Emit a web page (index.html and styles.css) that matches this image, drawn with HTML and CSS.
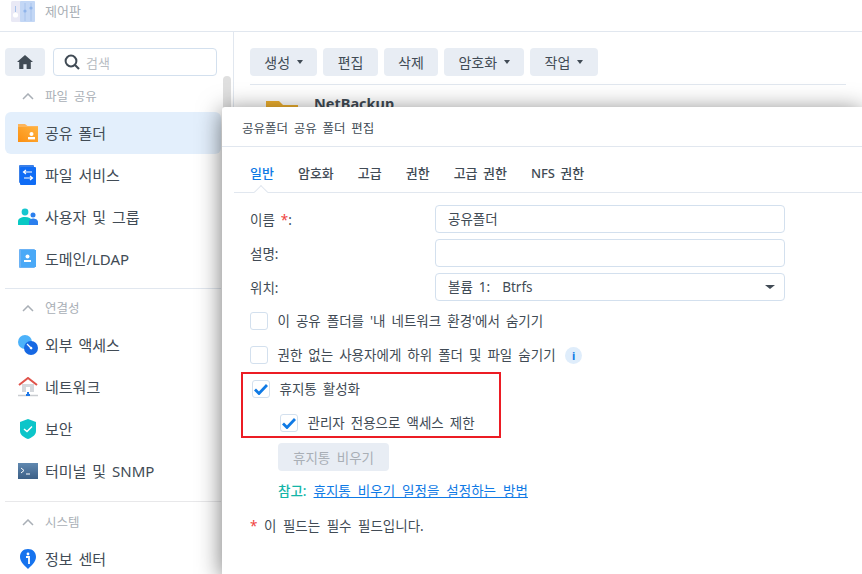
FILE: index.html
```html
<!DOCTYPE html>
<html lang="ko">

<head>
  <meta charset="UTF-8">
  <meta name="viewport" content="width=device-width, initial-scale=1.0">
  <title>제어판</title>
  <link rel="stylesheet" href="styles.css">
</head>

<body>
  <header class="titlebar">
    <svg class="app-icon" width="24" height="24" viewBox="0 0 24 24">
      <rect x="0" y="1" width="24" height="21" rx="1.5" fill="#e9e9f5" />
      <rect x="9" y="1" width="15" height="21" rx="1" fill="#c3d7f5" />
      <circle cx="4.5" cy="15" r="2.6" fill="#fff" />
      <path d="M4.5 6v6M14 3v18M20 3v18" stroke="#a8c3ec" stroke-width="1" />
      <circle cx="14" cy="11" r="1.6" fill="#8fb4ea" />
      <circle cx="20" cy="8" r="1.6" fill="#8fb4ea" />
    </svg>
    <span class="app-name">제어판</span>
  </header>

  <div class="window">
    <aside class="sidebar">
      <div class="search-row">
        <button class="home-btn">
          <svg width="16" height="14" viewBox="0 0 16 14">
            <path d="M8 0 0 7h2.2v7h4.2V9.2h3.2V14h4.2V7H16z" fill="#414b55" />
          </svg>
        </button>
        <div class="search-box">
          <svg width="16" height="16" viewBox="0 0 16 16">
            <circle cx="7" cy="7" r="5.4" fill="none" stroke="#414b55" stroke-width="2" />
            <path d="m11 11 4 4" stroke="#414b55" stroke-width="2.2" />
          </svg>
          <span>검색</span>
        </div>
      </div>

      <div class="group-title">
        <svg class="chevron" width="12" height="7" viewBox="0 0 12 7"><path d="m1 6 5-5 5 5" fill="none" stroke="#a9afb6" stroke-width="1.5" /></svg>
        <span>파일 공유</span>
      </div>
      <div class="nav-item active">
        <svg width="20" height="18" viewBox="0 0 20 18">
          <defs>
            <linearGradient id="folderFill" x1="0" y1="1" x2="1" y2="0">
              <stop offset="0" stop-color="#fb8f12" />
              <stop offset="1" stop-color="#ffb340" />
            </linearGradient>
          </defs>
          <path d="M0 0h7l2.5 2H20v16H0z" fill="#fdb55b" />
          <rect y="3" width="20" height="15" fill="url(#folderFill)" />
          <circle cx="13.5" cy="10" r="2" fill="#fff" />
          <rect x="10" y="13" width="7" height="2.4" fill="#fff" />
        </svg>
        <span>공유 폴더</span>
      </div>
      <div class="nav-item">
        <svg width="20" height="20" viewBox="0 0 20 20">
          <rect x="1" y="0" width="15" height="18" rx="1" fill="#3b80e8" />
          <rect x="2" y="2" width="16" height="18" rx="1" fill="#0f6cf5" />
          <path d="M14 7H6m2-2L5.500 7 8 9M6 13h8m-2-2 2.500 2-2.500 2" fill="none" stroke="#fff" stroke-width="1.200" />
        </svg>
        <span>파일 서비스</span>
      </div>
      <div class="nav-item">
        <svg width="20" height="18" viewBox="0 0 20 18">
          <circle cx="7" cy="4" r="3.400" fill="#16c7cf" />
          <path d="M0 17v-3.500C0 10.500 3 9 7 9s6 1.500 7 3.500V17z" fill="#08c9c4" />
          <circle cx="15" cy="7" r="2.500" fill="#2b7fee" />
          <path d="M11 17v-3c0-2 2-3.500 4-3.500s5 1 5 3.500v3z" fill="#2b7fee" />
        </svg>
        <span>사용자 및 그룹</span>
      </div>
      <div class="nav-item">
        <svg width="20" height="20" viewBox="0 0 20 20">
          <rect x="1" y="0" width="16" height="19" rx="1" fill="#6bb2f5" />
          <rect x="3" y="1" width="15" height="17" fill="#4aa9f7" />
          <circle cx="9.500" cy="7.500" r="2" fill="#fff" />
          <rect x="6" y="11" width="7" height="2" fill="#fff" />
        </svg>
        <span>도메인/LDAP</span>
      </div>

      <div class="divider"></div>

      <div class="group-title">
        <svg class="chevron" width="12" height="7" viewBox="0 0 12 7"><path d="m1 6 5-5 5 5" fill="none" stroke="#a9afb6" stroke-width="1.5" /></svg>
        <span>연결성</span>
      </div>
      <div class="nav-item">
        <svg width="20" height="20" viewBox="0 0 20 20">
          <circle cx="7" cy="7" r="7" fill="#4cb2fa" />
          <circle cx="13" cy="13" r="7" fill="#1668e3" />
          <path d="m9 9 5 5" stroke="#fff" stroke-width="1.300" />
          <circle cx="13" cy="13" r="1.300" fill="#fff" />
        </svg>
        <span>외부 액세스</span>
      </div>
      <div class="nav-item">
        <svg width="20" height="20" viewBox="0 0 20 20">
          <path d="M4 7h12v8H4z" fill="#d5d8dc" />
          <path d="M1 8 10 1l9 7" fill="none" stroke="#e0524a" stroke-width="2" />
          <rect x="8" y="10" width="4" height="5" fill="#fff" />
          <path d="M0 18.500h20" stroke="#c9ccd0" stroke-width="1.500" />
          <path d="M10 15v3" stroke="#1e78e8" stroke-width="2" />
          <rect x="8" y="17" width="4" height="2" fill="#1e78e8" />
        </svg>
        <span>네트워크</span>
      </div>
      <div class="nav-item">
        <svg width="20" height="20" viewBox="0 0 20 20">
          <path d="M10 0 18 3v9c0 4-4 6.500-8 8-4-1.500-8-4-8-8V3z" fill="#0cc5c9" />
          <path d="m6 10 3 2.500L14 7.500" fill="none" stroke="#fff" stroke-width="1.500" />
        </svg>
        <span>보안</span>
      </div>
      <div class="nav-item">
        <svg width="20" height="16" viewBox="0 0 20 16">
          <defs>
            <linearGradient id="termFill" x1="0" y1="0" x2="0" y2="1">
              <stop offset="0" stop-color="#6088b0" />
              <stop offset="1" stop-color="#3c5f86" />
            </linearGradient>
          </defs>
          <rect width="20" height="16" fill="url(#termFill)" />
          <path d="m3 5 3 2.500L3 10M8 11h4" fill="none" stroke="#fff" stroke-width="1" />
        </svg>
        <span>터미널 및 SNMP</span>
      </div>

      <div class="divider second"></div>

      <div class="group-title">
        <svg class="chevron" width="12" height="7" viewBox="0 0 12 7"><path d="m1 6 5-5 5 5" fill="none" stroke="#a9afb6" stroke-width="1.5" /></svg>
        <span>시스템</span>
      </div>
      <div class="nav-item">
        <svg width="20" height="20" viewBox="0 0 20 20">
          <path d="M10 0c5 0 8 3.500 8 8 0 5-5 9-8 12-3-3-8-7-8-12 0-4.500 3-8 8-8z" fill="#1673ee" />
          <circle cx="10" cy="5" r="1.400" fill="#fff" />
          <path d="M8 8h3v7" fill="none" stroke="#fff" stroke-width="1.800" />
        </svg>
        <span>정보 센터</span>
      </div>
      <div class="scroll-thumb"></div>
    </aside>

    <main class="content">
      <div class="toolbar">
        <button class="tool-btn">생성<i class="caret"></i></button>
        <button class="tool-btn">편집</button>
        <button class="tool-btn">삭제</button>
        <button class="tool-btn">암호화<i class="caret"></i></button>
        <button class="tool-btn">작업<i class="caret"></i></button>
      </div>
      <div class="share-row">
        <svg width="32" height="26" viewBox="0 0 32 26">
          <path d="M0 0h13l4 4h15v22H0z" fill="#eeb02f" />
        </svg>
        <strong>NetBackup</strong>
      </div>
    </main>
  </div>

  <section class="dialog">
    <div class="dialog-title">공유폴더 공유 폴더 편집</div>
    <nav class="tabs">
      <span class="tab current">일반</span>
      <span class="tab">암호화</span>
      <span class="tab">고급</span>
      <span class="tab">권한</span>
      <span class="tab">고급 권한</span>
      <span class="tab">NFS 권한</span>
    </nav>

    <div class="form">
      <div class="field">
        <label>이름 <em>*</em>:</label>
        <div class="input">공유폴더</div>
      </div>
      <div class="field">
        <label>설명:</label>
        <div class="input"></div>
      </div>
      <div class="field">
        <label>위치:</label>
        <div class="input select">볼륨 1:&nbsp; Btrfs<i class="caret dark"></i></div>
      </div>

      <div class="check top">
        <span class="box"></span>
        <span>이 공유 폴더를 '내 네트워크 환경'에서 숨기기</span>
      </div>
      <div class="check">
        <span class="box"></span>
        <span>권한 없는 사용자에게 하위 폴더 및 파일 숨기기</span>
        <span class="info">i</span>
      </div>

      <div class="highlight">
        <div class="check first">
          <span class="box"><svg width="14" height="11" viewBox="0 0 14 11"><path d="m1 5.500 4 4 8-8.500" fill="none" stroke="#0f7ae5" stroke-width="2.800" /></svg></span>
          <span>휴지통 활성화</span>
        </div>
        <div class="check sub">
          <span class="box"><svg width="14" height="11" viewBox="0 0 14 11"><path d="m1 5.500 4 4 8-8.500" fill="none" stroke="#0f7ae5" stroke-width="2.800" /></svg></span>
          <span>관리자 전용으로 액세스 제한</span>
        </div>
      </div>

      <button class="empty-btn" disabled>휴지통 비우기</button>
      <p class="note"><b>참고:</b> <a href="#">휴지통 비우기 일정을 설정하는 방법</a></p>
      <p class="required"><em>*</em> 이 필드는 필수 필드입니다.</p>
    </div>
  </section>
</body>

</html>
```

FILE: styles.css
```css
:root {
  --text-color: #414b55;
  --muted: #a9afb6;
  --line: #e1e7ef;
  --button-bg: #e8edf4;
  --input-border: #d3e0ee;
  --blue: #0f7ae5;
}

* {
  box-sizing: border-box;
}

html,
body {
  height: 100%;
}

body {
  margin: 0;
  overflow: hidden;
  background-color: #fff;
  color: var(--text-color);
  font-family: "Noto Sans", "Noto Sans CJK KR", sans-serif;
  font-size: 13.5px;
  word-spacing: 2.500px;
}

.titlebar {
  height: 32px;
  display: flex;
  align-items: flex-start;
  gap: 10px;
  padding-left: 11px;
  border-bottom: 1px solid var(--line);
}

.app-name {
  color: var(--muted);
  font-size: 13px;
  line-height: 22px;
}

.window {
  display: flex;
  height: 542px;
}

.sidebar {
  position: relative;
  width: 234px;
  flex: none;
  padding: 16px 12px 0 5px;
  border-right: 1px solid var(--line);
}

.search-row {
  display: flex;
  gap: 8px;
  margin-bottom: 8px;
}

.home-btn {
  width: 40px;
  height: 28px;
  padding: 0;
  border: none;
  border-radius: 4px;
  background-color: var(--button-bg);
  display: flex;
  align-items: center;
  justify-content: center;
}

.search-box {
  width: 164px;
  height: 28px;
  display: flex;
  align-items: center;
  gap: 6px;
  padding-left: 10px;
  border: 1px solid var(--input-border);
  border-radius: 4px;
  color: #b9bec4;
  font-size: 13px;
}

.group-title {
  height: 24px;
  margin-bottom: 4px;
  display: flex;
  align-items: center;
  gap: 11px;
  padding-left: 17px;
  color: var(--muted);
  font-size: 12.500px;
}

.group-title span,
.nav-item span,
.check span:not(.box):not(.info) {
  padding-bottom: 2px;
}

.nav-item {
  width: 216px;
  height: 42px;
  display: flex;
  align-items: center;
  gap: 7px;
  padding-left: 13px;
  border-radius: 6px;
  font-size: 15px;
  word-spacing: 2px;
}

.nav-item svg {
  flex: none;
}

.nav-item.active {
  background-color: #e3effc;
}

.divider {
  width: 216px;
  height: 1px;
  margin: 8px 0 7px;
  background-color: var(--line);
}

.divider.second {
  margin: 9px 0 8px;
  background-color: #e8e8ea;
}

.scroll-thumb {
  position: absolute;
  left: 223px;
  top: 44px;
  width: 8px;
  height: 60px;
  border-radius: 4px;
  background-color: #dfdfdf;
}

.content {
  flex: 1;
  padding: 16px 16px 0;
}

.toolbar {
  display: flex;
  gap: 6px;
  padding-bottom: 8px;
  border-bottom: 1px solid var(--line);
}

.tool-btn {
  height: 28px;
  padding: 0 14.300px;
  border: none;
  border-radius: 4px;
  background-color: var(--button-bg);
  color: var(--text-color);
  font: inherit;
  font-size: 14px;
  word-spacing: inherit;
  display: flex;
  align-items: center;
}

.caret {
  width: 0;
  height: 0;
  margin-left: 7px;
  border-left: 3.500px solid transparent;
  border-right: 3.500px solid transparent;
  border-top: 4px solid currentColor;
}

.share-row {
  display: flex;
  align-items: flex-start;
  gap: 16px;
  padding: 8px 0 0 16px;
  font-size: 14.500px;
  line-height: 20px;
}

.share-row svg {
  margin-top: 8px;
}

.dialog {
  position: absolute;
  left: 222px;
  top: 107px;
  right: 0;
  bottom: 0;
  background-color: #fff;
  box-shadow: 0 4px 24px rgba(0, 0, 0, 0.55);
  border-top-left-radius: 3px;
}

.dialog-title {
  height: 40px;
  padding: 11px 0 0 20px;
  border-bottom: 1px solid var(--line);
  font-size: 12.500px;
}

.tabs {
  display: flex;
  gap: 24px;
  height: 46px;
  margin-left: 12px;
  padding: 16px 0 0 16px;
  border-bottom: 1px solid var(--line);
  font-weight: 500;
  font-size: 13px;
  word-spacing: 2px;
}

.tab.current {
  position: relative;
  color: var(--blue);
}

/* little notch in the tab line under the current tab */
.tab.current::after {
  content: "";
  position: absolute;
  left: 6px;
  top: 24px;
  width: 9px;
  height: 9px;
  background-color: #fff;
  border-left: 1px solid var(--line);
  border-top: 1px solid var(--line);
  transform: rotate(45deg);
}

.form {
  padding: 12px 0 0 28px;
}

.field {
  display: flex;
  align-items: center;
  height: 28px;
  margin-bottom: 6px;
}

.field label {
  width: 185px;
}

em {
  color: #f0413c;
  font-style: normal;
}

.input {
  width: 350px;
  height: 28px;
  padding-left: 12px;
  border: 1px solid var(--input-border);
  border-radius: 4px;
  line-height: 26px;
  position: relative;
}

.caret.dark {
  position: absolute;
  right: 9px;
  top: 11px;
  margin: 0;
  color: #414b55;
  border-left-width: 5px;
  border-right-width: 5px;
}

.check {
  display: flex;
  align-items: center;
  gap: 9.500px;
  height: 18px;
  margin-bottom: 16px;
}

.check.top {
  margin-top: 11px;
}

.box {
  width: 18px;
  height: 18px;
  flex: none;
  border: 1px solid var(--input-border);
  border-radius: 3px;
  display: flex;
  align-items: center;
  justify-content: center;
}

.info {
  width: 17px;
  height: 17px;
  border-radius: 50%;
  background-color: #dfedfb;
  color: var(--blue);
  font-size: 11px;
  font-weight: 700;
  text-align: center;
  line-height: 17px;
}

.highlight {
  width: 260px;
  height: 66px;
  margin: -8px 0 5px -9px;
  padding: 6px 0 0 9px;
  border: 2px solid #ec1c24;
}

.check.sub {
  margin: 0 0 0 28px;
}

.empty-btn {
  display: block;
  width: 111px;
  height: 28px;
  margin-left: 28px;
  padding: 0;
  border: none;
  border-radius: 4px;
  background-color: var(--button-bg);
  color: var(--muted);
  font: inherit;
  word-spacing: 3px;
}

.note {
  margin: 11px 0 0 28px;
  line-height: 18px;
  word-spacing: 3.500px;
}

.note b {
  color: #13b5a8;
  font-weight: 500;
}

.note a {
  color: var(--blue);
}

.required {
  margin: 16.500px 0 0;
  line-height: 18px;
  word-spacing: 3px;
}
```
